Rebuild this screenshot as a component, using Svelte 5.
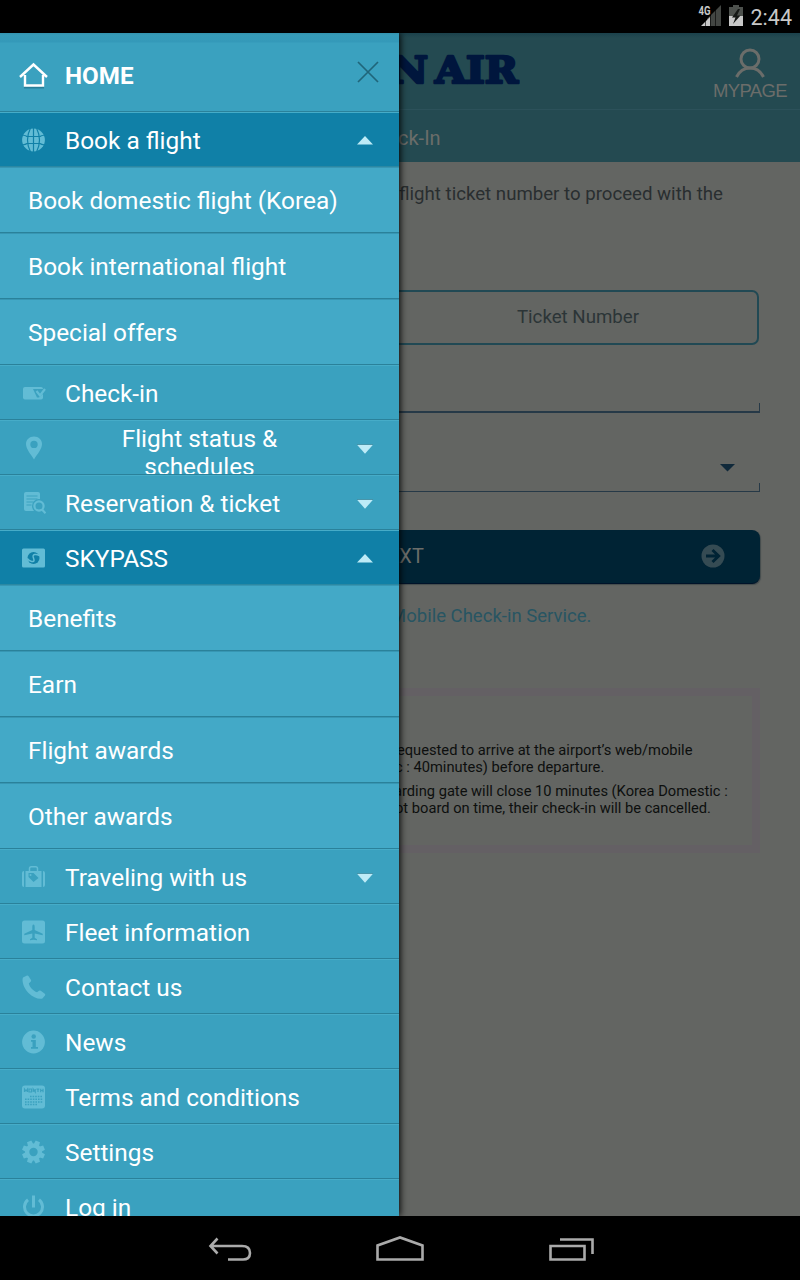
<script>
  const items = [
    { label: 'Book a flight', icon: 'globe', arrow: 'up', subs: ['Book domestic flight (Korea)', 'Book international flight', 'Special offers'] },
    { label: 'Check-in', icon: 'check' },
    { label: 'Flight status & schedules', icon: 'pin', arrow: 'down', wrap: true },
    { label: 'Reservation & ticket', icon: 'doc', arrow: 'down' },
    { label: 'SKYPASS', icon: 'card', arrow: 'up', subs: ['Benefits', 'Earn', 'Flight awards', 'Other awards'] },
    { label: 'Traveling with us', icon: 'bag', arrow: 'down' },
    { label: 'Fleet information', icon: 'plane' },
    { label: 'Contact us', icon: 'phone' },
    { label: 'News', icon: 'info' },
    { label: 'Terms and conditions', icon: 'calendar' },
    { label: 'Settings', icon: 'gear' },
    { label: 'Log in', icon: 'power' }
  ];
  const teeth = [0, 45, 90, 135, 180, 225, 270, 315];
</script>

{#snippet glyph(name)}
  <svg class="glyph" viewBox="0 0 24 24" width="24" height="24">
    {#if name === 'globe'}
      <circle cx="11.500" cy="12" r="11.400" />
      <g class="cut thin">
        <path d="M11.500 0v24M0 7q4 .5 5 1.500h13q1-1 5-1.500M0 17q4-.5 5-1.500h13q1 1 5 1.500" />
        <path d="M8.500 0q-6 12 0 24M14.500 0q6 12 0 24" />
      </g>
    {:else if name === 'check'}
      <rect x="1" y="6" width="20" height="12.500" rx="2" />
      <path class="hole" d="M11 8h11v4l-5 4.500h-2z" />
      <path class="line" d="M14.500 10l3.500 4.500 5-6.500" />
    {:else if name === 'pin'}
      <path fill-rule="evenodd" d="M12 .5c-4.600 0-8 3.200-8 7.600C4 13 8.500 18 12 23.500 15.500 18 20 13 20 8.100 20 3.700 16.600.5 12 .5zm0 4.200a3.700 3.700 0 1 1 0 7.400 3.700 3.700 0 0 1 0-7.400z" />
    {:else if name === 'doc'}
      <path d="M4 1h12a2 2 0 0 1 2 2v17H4a2 2 0 0 1-2-2V3q0-2 2-2z" />
      <path class="cut" d="M4.500 5h11M4.500 8h11M4.500 11h7M4.500 14h5" />
      <circle class="hole" cx="17" cy="15" r="7" />
      <circle class="line" cx="17" cy="15" r="4.600" />
      <path class="line" d="M20 18.500l3.500 3.700" />
    {:else if name === 'card'}
      <rect x="0" y="2.500" width="23" height="19" rx="1.500" />
      <circle class="dark" cx="11.500" cy="12" r="6" />
      <path class="line fine" d="M17.500 9.500c-4-2-7-1-6.300 1.500.7 2 2 5-1.500 4.500-2-.3-3.500-1.500-4.500-3" />
    {:else if name === 'bag'}
      <path class="line fine" d="M7.500 6V3.500q0-1.800 1.800-1.800h4.400q1.800 0 1.800 1.800V6" />
      <path d="M0 8q0-2 2-2v16q-2 0-2-2zM3.500 6h16v16h-16zM21 6q2 0 2 2v12q0 2-2 2z" />
      <path class="hole" d="M6.500 8h5l5 5-5 4-5-5z" />
      <circle cx="8.500" cy="10" r="1" />
    {:else if name === 'plane'}
      <rect x="0" y=".5" width="23" height="23" rx="2.500" />
      <path class="hole" d="M11.500 4.500c.9 0 1.200 1.400 1.200 2.500v3l8 3.800v1.400l-8-1.700v4.200l2.300 1.600v.9l-3.500-.5-3.500.5v-.9l2.300-1.600v-4.200l-8 1.700v-1.400l8-3.800V7c0-1.100.3-2.500 1.200-2.500z" />
    {:else if name === 'phone'}
      <path d="M1 2.500L5 .5q1-.3 1.600.7L9 5q.4 1-.4 1.700L6.800 8.500c.8 3.500 4.300 7.500 8.200 8.800l2-1.600q1-.5 1.800.1l4 3q.8.8.2 1.700l-2.600 3c-3.400 1.300-9.400-1.200-13.900-5.500S-.6 6 1 2.500z" />
    {:else if name === 'info'}
      <circle cx="11.500" cy="12" r="11.400" />
      <circle class="hole" cx="11.700" cy="6.500" r="2.200" />
      <path class="hole" d="M9 10h4.800v7H16v1.800H9V17h1.500v-5.200H9z" />
    {:else if name === 'calendar'}
      <rect x="0" y=".5" width="23" height="23" rx="3" />
      <path class="cut" d="M2.500 7V4l1.500 2 1.500-2v3M7 4h2.500v3H7zM11.200 7V4l2 3V4M14.500 4.200h2.800M16 4v3M18.700 3.800v3.400M21 3.800v3.400M18.700 5.500H21" />
      <path class="cut dots" d="M8 11.500h13M3 14.200h18M3 16.900h18M3 19.600h13" />
    {:else if name === 'gear'}
      {#each teeth as a}
        <path d="M9.200.6h4.600l.7 5.400h-6z" transform="rotate({a + 22.5} 11.5 12)" />
      {/each}
      <path fill-rule="evenodd" d="M11.500 3.500a8.500 8.500 0 1 1 0 17 8.500 8.500 0 0 1 0-17zm0 4.300a4.200 4.200 0 1 0 0 8.400 4.200 4.200 0 0 0 0-8.400z" />
    {:else}
      <path class="line thick" d="M11.500 .5v12M6 4.800a9 9 0 1 0 11 0" />
    {/if}
  </svg>
{/snippet}

<div class="device">
  <header class="status">
    <svg width="48" height="24" viewBox="0 0 48 24">
      <path fill="#434643" d="M9 22V15L23 1v21z" />
      <path fill="#000" d="M0 0h13v12H0z" />
      <path fill="#c8c8c8" d="M3 22l9-9v9z" />
      <path stroke="#000" stroke-width=".6" d="M7.500 9v14M12.500 3v20M17.500 3v20" />
      <text class="net" x="0.500" y="11" textLength="12" lengthAdjust="spacingAndGlyphs">4G</text>
      <path fill="#4d514d" d="M35 1h6v2h4v9H31V3h4z" />
      <path fill="#c8c8c8" d="M31 12h14v10H31z" />
      <path fill="#151815" d="M40 5l-6 8.500h3.500L35 20l7.500-8.500H39L42 5z" />
    </svg>
    <span>2:44</span>
  </header>

  <main>
    <nav class="drawer">
      <div class="home">
        <svg width="30" height="28" viewBox="0 0 30 28" fill="none">
          <path d="M6 15v9.500h18V15" stroke="#287f99" stroke-width="2" transform="translate(0 1)" />
          <path d="M1 15L14.500 2.500 28 15M6 13v10.500h18V13" stroke="#fff" stroke-width="2.400" />
        </svg>
        <b>HOME</b>
        <svg width="22" height="22" viewBox="0 0 22 22"><path d="M1 1l20 20M21 1L1 21" stroke="#20657a" stroke-width="1.700" /></svg>
      </div>
      {#each items as item}
        <div class="row" class:active={item.subs} class:wrap={item.wrap}>
          {@render glyph(item.icon)}
          <span class="label">{item.label}</span>
          {#if item.arrow}
            <svg class="arrow" class:down={item.arrow === 'down'} width="16" height="10" viewBox="0 0 16 10">
              {#if item.arrow === 'up'}
                <path d="M0 9.500L8 1l8 8.500z" fill="#bdebf7" />
              {:else}
                <path d="M0 0h16v1H0z" fill="#237890" /><path d="M0 .8L8 9.800 16 .8z" fill="#bdebf7" />
              {/if}
            </svg>
          {/if}
        </div>
        {#if item.subs}
          {#each item.subs as sub}
            <div class="sub">{sub}</div>
          {/each}
        {/if}
      {/each}
    </nav>

    <section class="page">
      <div class="brand">
        <svg class="logo" width="121" height="34" viewBox="0 0 121 34">
          <text x="-9" y="30" textLength="38" lengthAdjust="spacingAndGlyphs">N</text>
          <text x="36" y="30" textLength="83" lengthAdjust="spacingAndGlyphs">AIR</text>
        </svg>
        <div class="mypage">
          <svg width="32" height="30" viewBox="0 0 32 30" fill="none" stroke="#6b6d6a" stroke-width="3"><circle cx="16" cy="11" r="9" /><path d="M2.500 29Q7 20 16 20t13.500 9" /></svg>
          <span>MYPAGE</span>
        </div>
      </div>
      <div class="title">ck-In</div>
      <p class="intro">flight ticket number to proceed with the</p>
      <div class="ticket">Ticket Number</div>
      <div class="field first"></div>
      <div class="field second"><svg width="15" height="8"><path d="M0 0h15L7.500 7.500z" fill="#10293a" /></svg></div>
      <div class="next"><span>EXT</span>
        <svg width="24" height="24" viewBox="0 0 24 24"><circle cx="12" cy="12" r="11.500" fill="#354b53" /><path d="M5 12h12M11.500 6l6.200 6-6.200 6" fill="none" stroke="#002334" stroke-width="2.900" /></svg>
      </div>
      <p class="link">Mobile Check-in Service.</p>
      <div class="notice">
        <p><span class="n1">equested to arrive at the airport’s web/mobile</span><span class="n2">c : 40minutes) before departure.</span></p>
        <p><span class="n3">arding gate will close 10 minutes (Korea Domestic :</span><span class="n4">ot board on time, their check-in will be cancelled.</span></p>
      </div>
    </section>
  </main>

  <footer>
    <svg width="46" height="28" viewBox="0 0 46 28"><path d="M11.500 3.500L4.500 11l7 7.500M4.500 11H36q8 0 8 7t-8 6.500H22" /></svg>
    <svg width="50" height="28" viewBox="0 0 50 28"><path d="M2.500 24.500V10.500L25 2.500l22.500 8v14z" /></svg>
    <svg width="46" height="28" viewBox="0 0 46 28"><path d="M2.500 11h34v13.500h-34zM12 4.500h32.500V19" /></svg>
  </footer>
</div>

<style>
  :global(body) { margin: 0; background: #000; }
  .device { width: 800px; height: 1280px; display: grid; grid-template-rows: 33px 1183px 64px; font-family: Roboto, sans-serif; background: #000; overflow: hidden; }
  p { margin: 0; }
  .status { display: flex; align-items: flex-start; justify-content: flex-end; padding: 4px 8px 0 0; gap: 5px; color: #c8c8c8; font-size: 21.500px; line-height: 27px; }
  .net { font: bold 12px Roboto, sans-serif; fill: #c8c8c8; }
  main { display: grid; grid-template-columns: 399px 401px; overflow: hidden; }
  .drawer { height: 1183px; overflow: hidden; background: #3aa1bf; color: #fff; font-size: 24.400px; box-shadow: 1px 0 7px #000; z-index: 1; }
  .home { box-sizing: border-box; height: 79px; display: flex; align-items: center; padding: 8px 20px 0 19px; border-bottom: 1px solid #2a819a; background: linear-gradient(#3392ae, #369bb8 2px, #3499b9 9px, #3aa1bf 10px); }
  .home b { flex: 1; margin-left: 16px; font-size: 24.200px; }
  .home svg:last-child { margin-top: -8px; }
  .row { box-sizing: border-box; height: 55px; display: flex; align-items: center; padding: 3px 26px 0 22px; border-top: 1px solid #46acc8; border-bottom: 1px solid #2a819a; overflow: hidden; }
  .active { background: #1080a7; border-bottom-color: #2b88a3; }
  .label { flex: 1; margin: -2px 0 0 19px; white-space: nowrap; }
  .arrow { margin-top: -2px; }
  .down { margin-top: 0; }
  .wrap { align-items: flex-start; }
  .wrap .label { white-space: normal; text-align: center; line-height: 28px; padding: 3px 67px 0 28px; margin-right: -16px; }
  .wrap .glyph { margin-top: 12px; }
  .wrap .arrow { margin-top: 20px; }
  .glyph { flex: none; fill: #62bcd5; margin-top: -3px; }
  .glyph .hole { fill: #3aa1bf; }
  .glyph .dark { fill: #1080a7; }
  .glyph .cut { fill: none; stroke: #3aa1bf; stroke-width: 1.200; }
  .glyph .thin { stroke: #1080a7; }
  .glyph .dots { stroke-width: 1.500; stroke-dasharray: 1.600 1; }
  .glyph .line { fill: none; stroke: #62bcd5; stroke-width: 2.200; }
  .glyph .fine { stroke-width: 1.500; }
  .glyph .thick { stroke-width: 3; }
  .sub { box-sizing: border-box; height: 66px; padding: 2px 0 0 28px; line-height: 62px; background: #43a9c7; border-top: 1px solid #3796b3; border-bottom: 1px solid #2a819a; }
  .page { background: #636562; overflow: hidden; white-space: nowrap; display: flex; flex-direction: column; }
  .brand { box-sizing: border-box; flex: none; height: 77px; background: linear-gradient(#1b414b, #244a51 5px); display: flex; justify-content: space-between; padding: 15px 12px 0 0; border-bottom: 1px solid #2c515a; }
  .logo { margin-top: 5px; }
  .logo text { font: bold 37px "DejaVu Serif", serif; fill: #00163d; stroke: #00163d; stroke-width: 2.600; stroke-linejoin: round; }
  .mypage { width: 76px; display: flex; flex-direction: column; align-items: center; color: #6b6d6a; font: 18.500px/25px "Liberation Sans", sans-serif; letter-spacing: -.6px; }
  .mypage svg { flex: none; }
  .title { flex: none; height: 52px; line-height: 56px; background: #244a51; color: #6b6d6a; font-size: 20px; text-indent: -1px; }
  .intro { height: 128px; flex: none; line-height: 64px; font-size: 18.650px; color: #292e30; }
  .ticket { box-sizing: border-box; width: 360px; height: 55px; border: 2px solid #214954; border-left: 0; border-radius: 0 7px 7px 0; text-align: center; line-height: 50px; font-size: 18.700px; color: #2c3537; }
  .field { box-sizing: border-box; width: 361px; height: 10px; border-right: 1px solid #263947; }
  .first { margin-top: 58px; border-bottom: 2px solid #263947; }
  .second { margin-top: 70px; height: 9px; border-bottom: 1px solid #263947; }
  .second svg { display: block; margin: -19px 0 0 321px; }
  .next { box-sizing: border-box; margin-top: 38px; width: 361px; height: 54px; background: #002334; border-radius: 0 8px 8px 0; border-bottom: 1px solid #001329; box-shadow: 1px 1px 1px #444c4d; display: flex; align-items: center; justify-content: space-between; padding: 0 35px 1px 0; color: #6b6d6a; font-size: 20px; }
  .next span { margin-left: -11px; }
  .link { height: 104px; line-height: 65px; margin-left: -9px; font-size: 18.550px; color: #285562; }
  .notice { box-sizing: border-box; width: 361px; height: 165px; border: 8px solid #646064; border-left: 0; padding-top: 46px; font-size: 14.680px; line-height: 17px; color: #0d0f0e; }
  .notice p { display: flex; flex-direction: column; margin-bottom: 7px; }
  .n1 { margin-left: -2px; } .n2 { margin-left: -4px; } .n3 { margin-left: -5px; } .n4 { margin-left: -4px; }
  footer { display: flex; justify-content: center; gap: 123px; align-items: center; padding-top: 2px; }
  footer path { fill: none; stroke: #aaa; stroke-width: 2.600; }
</style>
